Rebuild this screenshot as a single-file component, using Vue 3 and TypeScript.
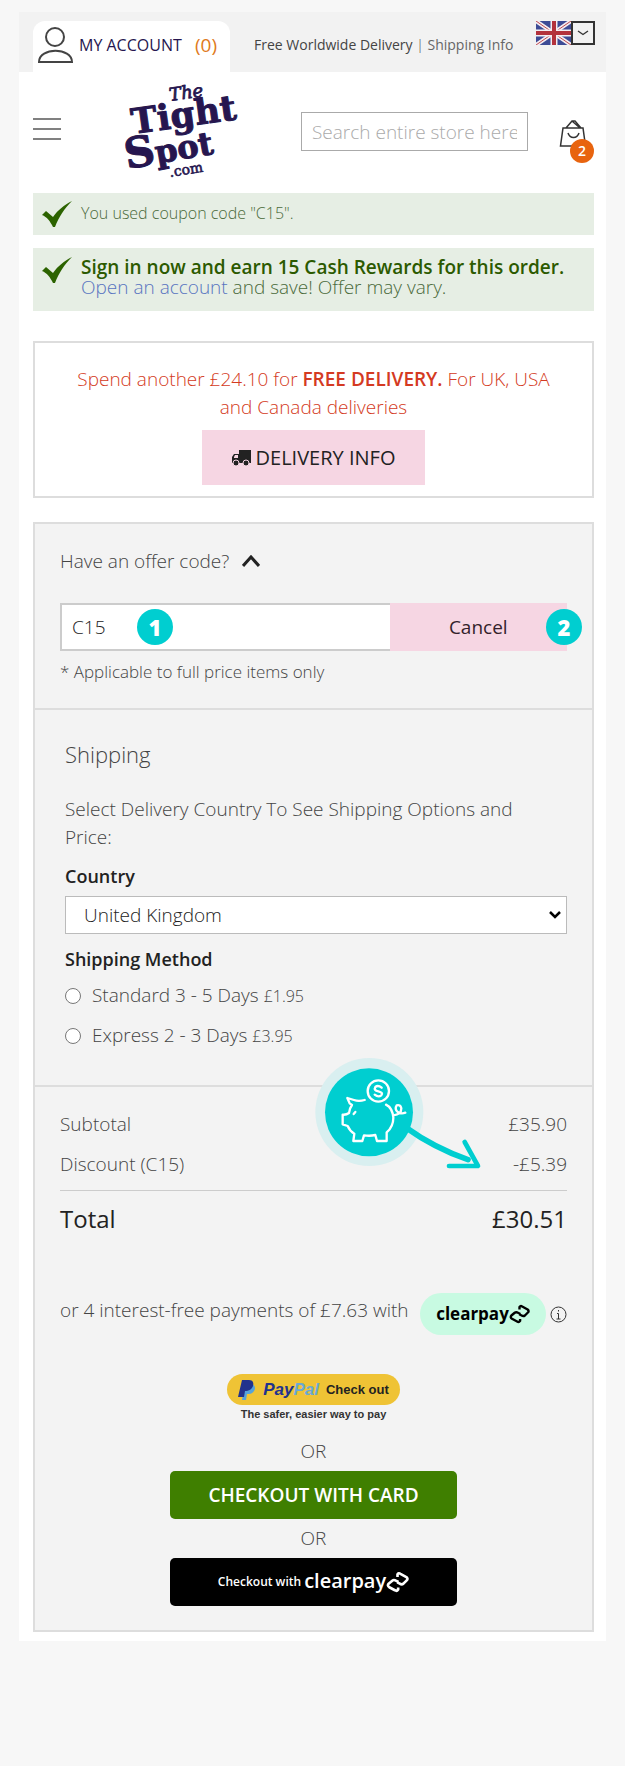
<script setup lang="ts">
import { ref } from 'vue'

interface Method {
  id: string
  label: string
  price: string
}

const search = ref('')
const code = ref('C15')
const country = ref('United Kingdom')
const method = ref('')
const methods: Method[] = [
  { id: 'standard', label: 'Standard 3 - 5 Days', price: '£1.95' },
  { id: 'express', label: 'Express 2 - 3 Days', price: '£3.95' },
]
</script>

<template>
  <div class="page">
    <header>
      <div class="topbar">
        <a href="#" class="account">
          <svg width="36" height="38" viewBox="0 0 36 38" fill="none" stroke="#444" stroke-width="2" aria-hidden="true">
            <circle cx="17" cy="11" r="9" />
            <path d="M1 36C1 21 34 21 34 36Z" />
          </svg>
          <span>MY ACCOUNT</span>
          <span class="points">(0)</span>
        </a>
        <p class="promo"><b>Free Worldwide Delivery</b> | <a href="#">Shipping Info</a></p>
        <button class="locale" aria-label="Choose country">
          <svg width="35" height="24" viewBox="0 0 35 24" aria-hidden="true">
            <path fill="#3d4b95" d="M0 0h35v24H0z" />
            <path stroke="#f3eef2" stroke-width="4" d="M0 0l35 24M35 0L0 24" />
            <path stroke="#c04a50" stroke-width="1" d="M0 0l35 24M35 0L0 24" />
            <path stroke="#f3eef2" stroke-width="7" d="M18 0v24M0 12h35" />
            <path stroke="#b3323c" stroke-width="4" d="M18 0v24M0 12h35" />
          </svg>
          <span class="arrow">
            <svg width="12" height="6" viewBox="0 0 12 6" fill="none" stroke="#333" stroke-width="1.4" aria-hidden="true"><path d="M1 1l5 3.500L11 1" /></svg>
          </span>
        </button>
      </div>
      <div class="masthead">
        <button class="menu" aria-label="Menu"><i></i><i></i><i></i></button>
        <a href="#" class="logo" aria-label="The Tight Spot .com">
          <svg width="120" height="100" viewBox="0 0 120 100" fill="#26164f" stroke="#26164f" stroke-linejoin="round" font-family="'DejaVu Serif', 'Liberation Serif', serif" font-weight="700">
            <text transform="translate(49 18) rotate(-8)" font-size="18" font-style="italic" font-weight="400" stroke-width=".8">The</text>
            <text transform="translate(12 51) rotate(-8)" font-size="35" stroke-width="1">Tight</text>
            <text transform="translate(6 86) rotate(-10)" font-size="32" stroke-width="1"><tspan font-size="42">S</tspan>pot</text>
            <text transform="translate(49 94) rotate(-9)" font-size="14" font-weight="400" stroke-width=".6">.com</text>
          </svg>
        </a>
        <input v-model="search" class="search" type="text" placeholder="Search entire store here" aria-label="Search entire store" />
        <button class="bag" aria-label="Shopping bag">
          <svg width="28" height="28" viewBox="0 0 28 28" fill="none" stroke="#333" stroke-width="1.500" aria-hidden="true">
            <path d="M4 9h20l2.500 18H1.500zM7 9l6-7h3l6 7M13 2l8 7M9 14c2 6 9 6 11 0" />
          </svg>
          <span class="count">2</span>
        </button>
      </div>
    </header>

    <main>
      <div class="notice">
        <svg class="tick" width="30" height="26" viewBox="0 0 30 26" fill="#2c6300" aria-hidden="true"><path d="M0 14l4-4 7 6C16 9 22 4 30 0C22 8 17 16 13 26h-2C8 20 5 16 0 14z" /></svg>
        <p class="small">You used coupon code "C15".</p>
      </div>
      <div class="notice tall">
        <svg class="tick" width="30" height="26" viewBox="0 0 30 26" fill="#2c6300" aria-hidden="true"><path d="M0 14l4-4 7 6C16 9 22 4 30 0C22 8 17 16 13 26h-2C8 20 5 16 0 14z" /></svg>
        <p><b>Sign in now and earn 15 Cash Rewards for this order.</b><br /><a href="#">Open an account</a> and save! Offer may vary.</p>
      </div>

      <section class="delivery">
        <p>Spend another £24.10 for <b>FREE DELIVERY.</b> For UK, USA and Canada deliveries</p>
        <button class="info-button">
          <svg width="19" height="18" viewBox="0 0 19 18" aria-hidden="true">
            <path fill="#222" d="M7 1h12v13H7zM2 5h5v9H0V8z" />
            <path fill="#f6d6e3" d="M2 8l1-2h3v3H2z" />
            <g fill="#222" stroke="#f6d6e3"><circle cx="4" cy="14" r="3" /><circle cx="14" cy="14" r="3" /></g>
          </svg>
          DELIVERY INFO
        </button>
      </section>

      <div class="panel">
        <section class="offer">
          <button class="toggle">
            Have an offer code?
            <svg width="18" height="12" viewBox="0 0 18 12" fill="none" stroke="#222" stroke-width="3" aria-hidden="true"><path d="M1 11l8-9 8 9" /></svg>
          </button>
          <div class="code-row">
            <input v-model="code" type="text" aria-label="Offer code" />
            <button class="cancel">Cancel</button>
            <span class="step one">1</span>
            <span class="step two">2</span>
          </div>
          <p class="hint">* Applicable to full price items only</p>
        </section>

        <section class="shipping">
          <h2>Shipping</h2>
          <p class="intro">Select Delivery Country To See Shipping Options and Price:</p>
          <label class="field" for="country">Country</label>
          <div class="select-wrap">
            <select id="country" v-model="country">
              <option>United Kingdom</option>
            </select>
            <svg width="12" height="8" viewBox="0 0 12 8" fill="none" stroke="#000" stroke-width="2.500" aria-hidden="true"><path d="M1 1l5 5 5-5" /></svg>
          </div>
          <h3 class="field">Shipping Method</h3>
          <label v-for="m in methods" :key="m.id" class="method">
            <input v-model="method" type="radio" name="method" :value="m.id" />
            <span>{{ m.label }} <small>{{ m.price }}</small></span>
          </label>
        </section>

        <section class="totals">
          <dl>
            <div><dt>Subtotal</dt><dd>£35.90</dd></div>
            <div><dt>Discount (C15)</dt><dd>-£5.39</dd></div>
            <div class="total"><dt>Total</dt><dd>£30.51</dd></div>
          </dl>
          <svg class="saving" width="170" height="115" viewBox="70 20 510 345" fill="none" stroke-linecap="round" stroke-linejoin="round" aria-hidden="true">
            <circle cx="236" cy="188" r="162" fill="#d9eff0" />
            <path d="M345 234Q430 295 532 331" stroke="#00ced0" stroke-width="17" />
            <path d="M522 278L562 350L475 350" stroke="#00ced0" stroke-width="14" />
            <circle cx="235" cy="189" r="132" fill="#00ced0" />
            <g stroke="#fff" stroke-width="7">
              <path d="M222 152Q204 157 190 152L170 146L177 162L184 167Q176 178 175 191Q167 197 156 196L156 225L171 230Q178 246 191 253L188 275L215 275L220 258Q238 261 254 257L259 275L288 275L288 249Q308 232 308 205Q305 175 286 166M308 198Q332 196 332 177Q329 165 318 168Q311 179 321 188Q332 195 344 190M189 194L194 188" />
              <circle cx="263" cy="125" r="32" />
              <path d="M273 115Q262 106 254 113Q248 123 263 126Q279 130 272 138Q263 145 252 136" />
            </g>
          </svg>
        </section>

        <section class="checkout">
          <div class="instalments">
            <span class="split">or 4 interest-free payments of £7.63 with</span>
            <span class="pill">
              clearpay
              <svg width="21" height="20" viewBox="24 66 70 66" fill="none" stroke="#000" stroke-width="8" stroke-linejoin="round" aria-hidden="true"><path d="M59 84V76Q62 70 68 74L86 84Q92 89 87 94L77 104Q72 108 66 104L58 100M61 116V122Q57 128 51 124L34 115Q27 110 32 104L43 95Q48 91 54 95L62 99" /></svg>
            </span>
            <button class="about" aria-label="About Clearpay">
              <svg width="17" height="17" viewBox="0 0 17 17" fill="none" stroke="#333" aria-hidden="true"><circle cx="8.500" cy="8.500" r="7.500" /><path d="M8.500 4v1.500M7 7.500h1.500V13M6.500 13h4" /></svg>
            </button>
          </div>
          <button class="paypal">
            <svg width="18" height="20" viewBox="0 0 18 20" aria-hidden="true">
              <path fill="#55a3dc" d="M7 4h6c4 1 5 4 3 7s-4 3-7 3l-1 6H4z" />
              <path fill="#21328d" d="M4 0h7c4 0 5 3 4 6s-4 5-8 5l-1 6H0z" />
            </svg>
            <span class="brand"><em>Pay</em><em class="pal">Pal</em></span>
            <span>Check out</span>
          </button>
          <p class="tagline">The safer, easier way to pay</p>
          <p class="or">OR</p>
          <button class="card">CHECKOUT WITH CARD</button>
          <p class="or">OR</p>
          <button class="clearpay">
            <span>Checkout with</span>
            <b>clearpay</b>
            <svg width="23" height="22" viewBox="24 66 70 66" fill="none" stroke="#fff" stroke-width="8" stroke-linejoin="round" aria-hidden="true"><path d="M59 84V76Q62 70 68 74L86 84Q92 89 87 94L77 104Q72 108 66 104L58 100M61 116V122Q57 128 51 124L34 115Q27 110 32 104L43 95Q48 91 54 95L62 99" /></svg>
          </button>
        </section>
      </div>
    </main>
  </div>
</template>

<style>
body {
  background: #f7f7f7;
}
</style>

<style scoped>
* {
  box-sizing: border-box;
}

.page {
  margin: 12px 19px;
  background: #fff;
  color: #444;
  font: 300 19px/28px 'Open Sans', 'Noto Sans', sans-serif;
  padding-bottom: 9px;
}

p,
h2,
h3,
dl,
dd {
  margin: 0;
}

button,
input,
select {
  font: inherit;
  color: inherit;
  border: 0;
  border-radius: 0;
  margin: 0;
  padding: 0;
  background: none;
}

a {
  color: inherit;
  text-decoration: none;
}

b {
  font-weight: 600;
}

svg {
  flex: none;
}

.topbar {
  display: flex;
  align-items: flex-start;
  height: 60px;
  padding: 9px 11px 0 14px;
  background: #f2f2f2;
}

.account {
  display: flex;
  align-items: center;
  width: 197px;
  height: 51px;
  padding: 0 5px 4px;
  border-radius: 12px 12px 0 0;
  background: #fff;
  color: #26164f;
  font-size: 16px;
  font-weight: 400;
}

.account span {
  margin-left: 5px;
}

.account .points {
  margin-left: auto;
  margin-right: 8px;
  color: #e07a20;
  font-size: 19px;
}

.promo {
  margin: 10px auto 0 24px;
  font-size: 14px;
  line-height: 28px;
  white-space: nowrap;
}

.promo b,
.promo a {
  font-weight: 400;
}

.promo a {
  color: #666;
}

.locale {
  display: flex;
}

.arrow {
  display: flex;
  align-items: center;
  justify-content: center;
  width: 24px;
  height: 24px;
  border: 2px solid #333;
}

.masthead {
  display: flex;
  align-items: center;
  height: 121px;
  padding: 0 19px 0 14px;
}

.menu {
  display: grid;
  gap: 8px;
  width: 28px;
  margin-bottom: 8px;
}

.menu i {
  height: 2px;
  background: #808080;
}

.logo {
  display: flex;
  margin: 0 auto 0 60px;
}

.search {
  width: 227px;
  height: 39px;
  margin-bottom: 2px;
  padding: 0 10px;
  border: 1px solid #aaa;
}

.search::placeholder {
  color: #aaa;
  opacity: 1;
}

.bag {
  position: relative;
  display: flex;
  margin-left: 31px;
}

.count {
  position: absolute;
  left: 11px;
  top: 20px;
  width: 24px;
  height: 24px;
  border-radius: 50%;
  background: #e8640f;
  color: #fff;
  font-size: 14px;
  font-weight: 600;
  line-height: 24px;
}

main {
  padding: 0 12px 0 14px;
}

.notice {
  display: flex;
  gap: 9px;
  min-height: 42px;
  margin-bottom: 13px;
  padding: 8px 9px;
  background: #e6eee4;
  color: #4a6a3a;
  line-height: 20px;
}

.notice.tall {
  min-height: 63px;
  padding-top: 9px;
}

.notice .small {
  padding-top: 2px;
  font-size: 16px;
}

.notice b {
  color: #2c5a00;
}

.notice a {
  color: #5874c0;
}

.delivery {
  margin-top: 30px;
  padding: 22px 30px 11px;
  border: 2px solid #ddd;
  color: #d43a22;
  text-align: center;
}

.info-button {
  display: inline-flex;
  align-items: center;
  gap: 5px;
  height: 55px;
  margin-top: 9px;
  padding: 0 30px;
  background: #f6d6e3;
  color: #222;
  font-size: 20px;
  font-weight: 400;
}

.panel {
  margin-top: 24px;
  border: 2px solid #ddd;
  background: #f3f3f3;
}

.panel section {
  padding: 0 25px;
}

.panel .offer {
  padding-top: 23px;
  padding-bottom: 22px;
  border-bottom: 2px solid #ddd;
}

.toggle {
  display: flex;
  align-items: center;
  gap: 13px;
}

.code-row {
  position: relative;
  display: flex;
  margin: 28px 0 7px;
}

.code-row input {
  flex: 1;
  min-width: 0;
  height: 48px;
  padding: 0 10px;
  border: 2px solid #ccc;
  border-right: 0;
  background: #fff;
  color: #222;
}

.cancel {
  width: 35%;
  background: #f6d6e3;
  color: #331f2b;
  font-weight: 500;
}

.step {
  position: absolute;
  top: 6px;
  width: 36px;
  height: 36px;
  border-radius: 50%;
  background: #00ced0;
  color: #fff;
  font-size: 22px;
  font-weight: 800;
  line-height: 36px;
  text-align: center;
}

.one {
  left: 77px;
}

.two {
  right: -15px;
}

.hint {
  font-size: 17px;
}

.panel .shipping {
  padding: 30px 25px 24px 30px;
  border-bottom: 2px solid #ddd;
}

h2 {
  margin-bottom: 27px;
  font-size: 22px;
  font-weight: 300;
}

.intro {
  padding-right: 32px;
}

.field {
  display: block;
  margin: 11px 0 6px;
  color: #222;
  font-size: 18px;
  font-weight: 600;
}

.select-wrap {
  position: relative;
}

select {
  appearance: none;
  display: block;
  width: 100%;
  height: 38px;
  padding: 0 18px;
  border: 1px solid #bbb;
  background: #fff;
  color: #222;
}

.select-wrap svg {
  position: absolute;
  right: 6px;
  top: 15px;
}

h3.field {
  margin-bottom: 8px;
}

.method {
  display: flex;
  align-items: center;
  gap: 11px;
  margin-bottom: 11px;
}

.method input {
  appearance: none;
  width: 16px;
  height: 16px;
  border: 1px solid #777;
  border-radius: 50%;
  background: #fff;
}

.method input:checked {
  background: #444;
}

small {
  font-size: 16px;
}

.panel .totals {
  position: relative;
  padding-top: 17px;
}

dl div {
  display: flex;
  justify-content: space-between;
  line-height: 40px;
}

dl .total {
  margin-top: 6px;
  padding-top: 8px;
  border-top: 1px solid #ccc;
  color: #222;
  font-size: 24px;
  font-weight: 400;
}

.saving {
  position: absolute;
  left: 50%;
  top: -31px;
}

.panel .checkout {
  display: flex;
  flex-direction: column;
  align-items: center;
  padding-top: 54px;
  padding-bottom: 24px;
}

.instalments {
  display: flex;
  align-items: center;
  justify-content: space-between;
  align-self: stretch;
  margin-bottom: 39px;
  white-space: nowrap;
}

.split {
  margin-bottom: 8px;
}

.pill {
  display: flex;
  align-items: center;
  justify-content: center;
  width: 126px;
  height: 42px;
  margin-left: auto;
  margin-right: 4px;
  border-radius: 21px;
  background: #c8fae2;
  color: #000;
  font-size: 17px;
  font-weight: 700;
}

.about {
  display: flex;
}

.paypal {
  display: flex;
  align-items: center;
  justify-content: center;
  gap: 7px;
  width: 173px;
  height: 31px;
  border-radius: 16px;
  background: #efc335;
  color: #222;
  font: bold 13px/31px 'Liberation Sans', Arial, sans-serif;
}

.brand {
  color: #21328d;
  font-size: 17px;
}

.pal {
  color: #6aa9d4;
}

.tagline {
  color: #333;
  font: bold 11px/18px 'Liberation Sans', Arial, sans-serif;
}

.or {
  margin: 14px 0 6px;
}

.card,
.clearpay {
  width: 287px;
  height: 48px;
  border-radius: 5px;
  background: #3f7f00;
  color: #fff;
  font-weight: 600;
}

.card + .or {
  margin: 5px 0 6px;
}

.clearpay {
  display: flex;
  align-items: center;
  justify-content: center;
  gap: 3px;
  background: #000;
  font-size: 12px;
}

.clearpay b {
  margin: -3px -3px 0 0;
  font-size: 20px;
}
</style>
